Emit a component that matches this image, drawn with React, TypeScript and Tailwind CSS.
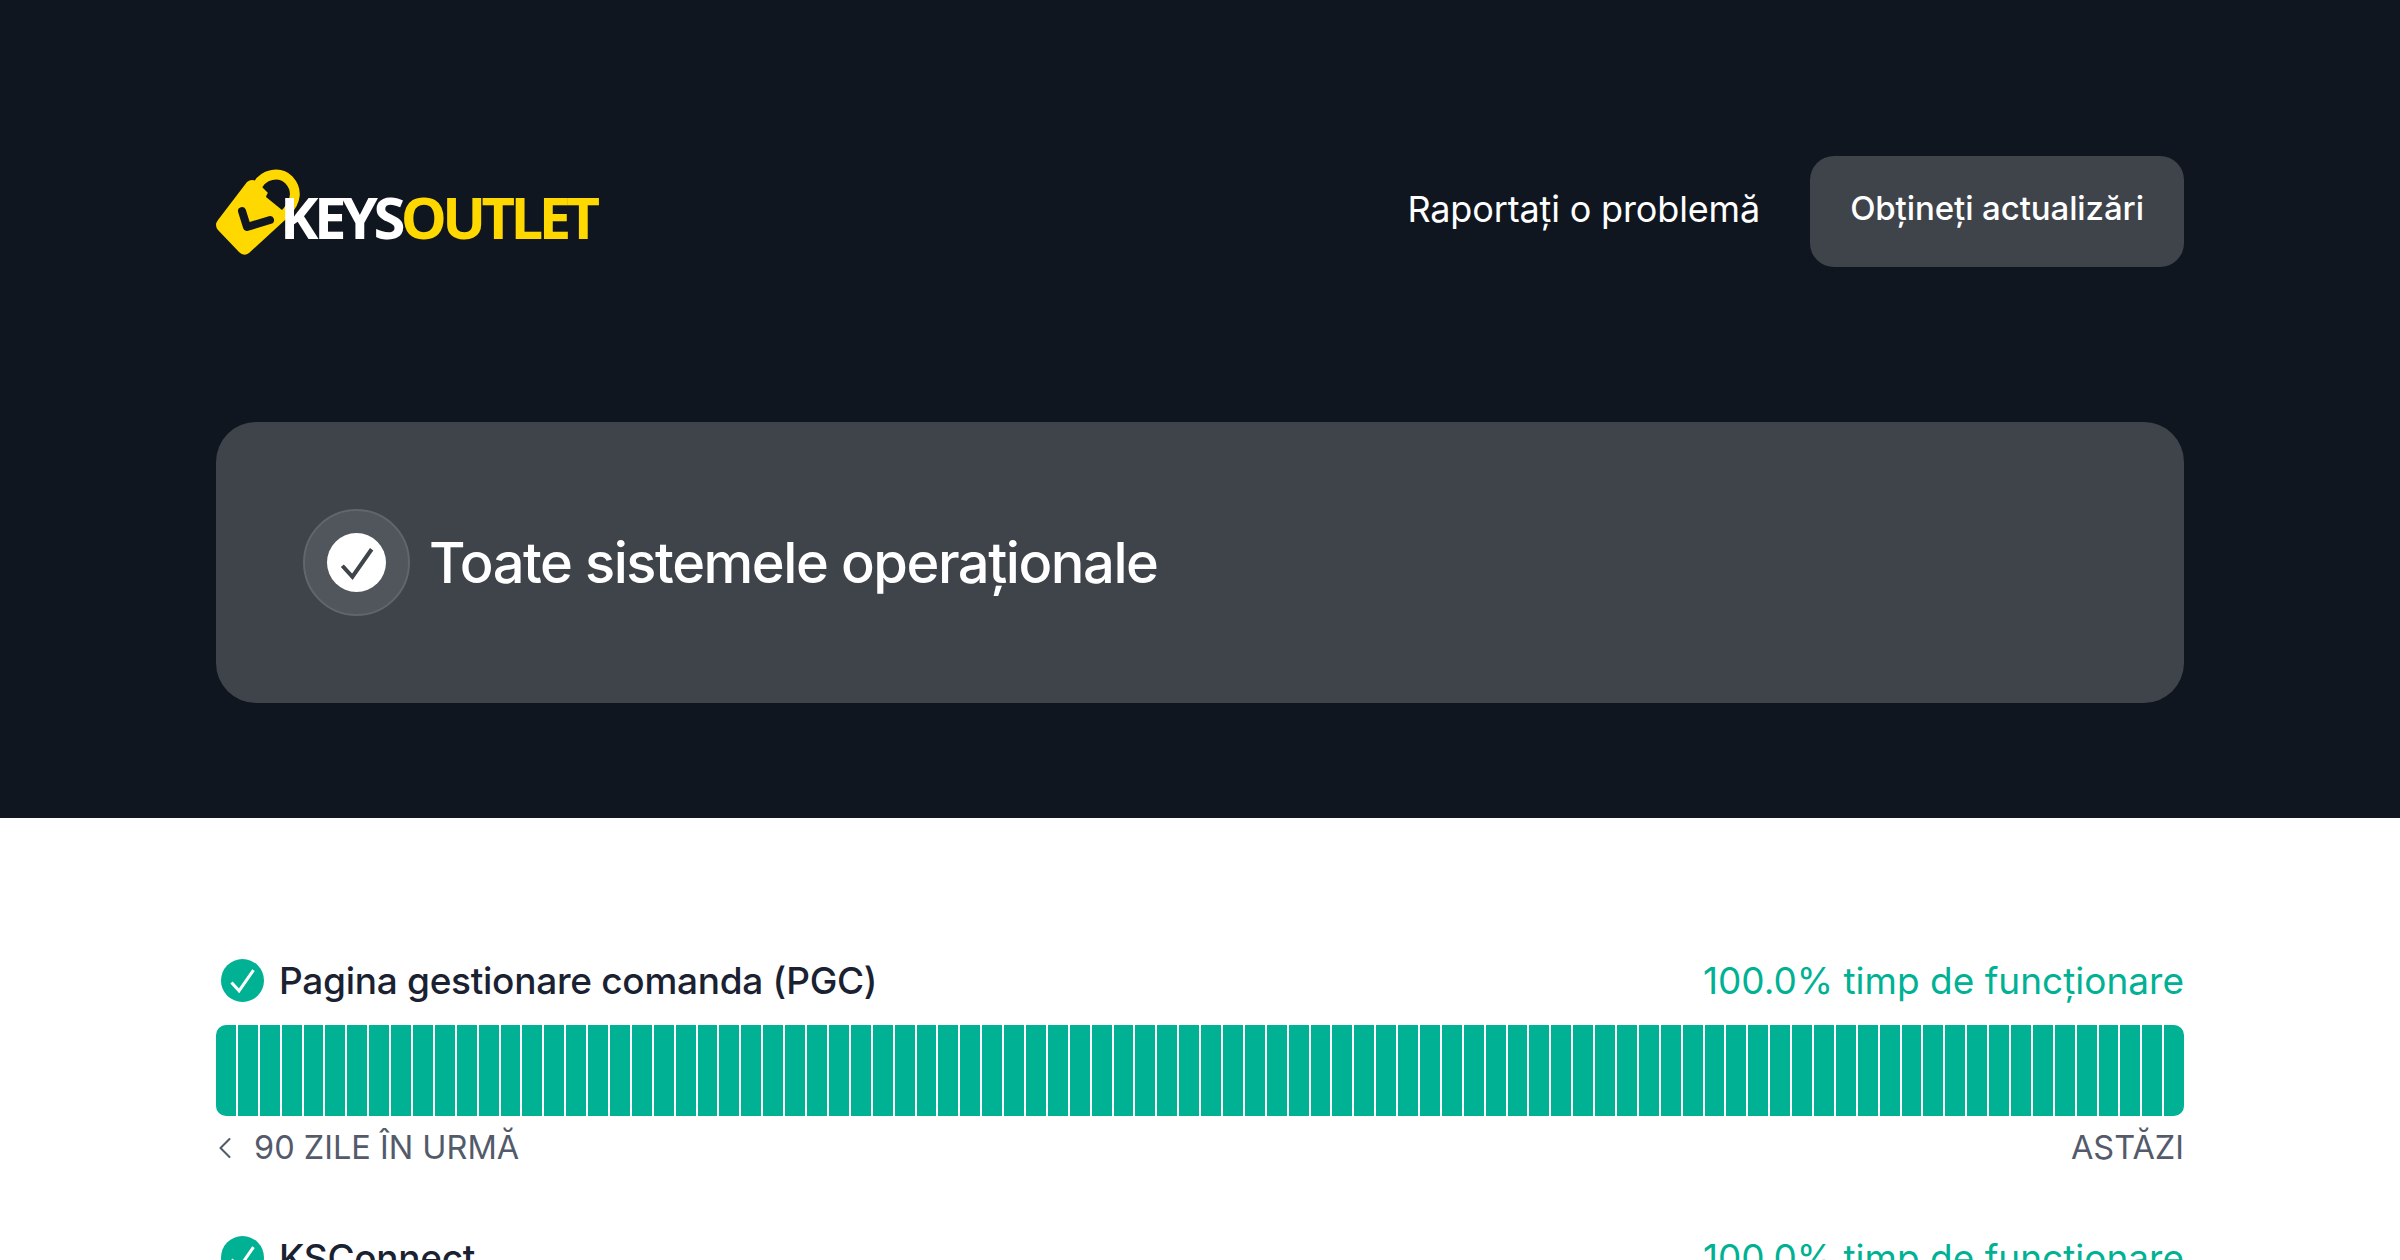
import React from 'react';
import { ChevronLeft } from 'lucide-react';

const days = Array.from({ length: 90 }, (_, i) => i);

const Tick: React.FC<{ className: string; strokeWidth: number }> = ({ className, strokeWidth }) => (
  <svg viewBox="0 0 24 24" fill="none" stroke="currentColor" strokeWidth={strokeWidth} className={className}>
    <path d="M4 13.5 L9.5 19.5 L20 4.5" />
  </svg>
);

const Logo: React.FC = () => (
  <div className="flex items-center h-[88px] w-[384px] mt-[3px]">
    <svg viewBox="0 0 88 88" className="w-[88px] h-[88px] shrink-0">
      {/* shackle */}
      <path d="M40 20 C46 4 64 2 73 11 C82 21 80 33 70 43" fill="none" stroke="#ffd800" strokeWidth="10" />
      {/* lock body */}
      <path d="M31 13 Q36 9 41 13 L69 41 Q73 46 69 51 L33 84 Q28 88 23 83 L2 61 Q-2 56 2 51 Z" fill="#ffd800" />
      {/* check */}
      <path d="M26 42 L31 58 L54 51" fill="none" stroke="#0f1620" strokeWidth="8" strokeLinecap="round" strokeLinejoin="round" />
      {/* shackle opening */}
      <path d="M50 28 C52 20 62 17 68 23 C73 29 71 36 66 41 Z" fill="#0f1620" />
    </svg>
    <div className="-ml-[24px] mt-[7px] font-['Open_Sans'] font-bold text-[58px] leading-none tracking-[-4.6px] whitespace-nowrap">
      <span className="text-white">KEYS</span>
      <span className="text-[#ffd800]">OUTLET</span>
    </div>
  </div>
);

const ServiceRow: React.FC<{ name: string }> = ({ name }) => (
  <div className="mb-[72px]">
    <div className="flex items-center justify-between h-[42px] mb-[24px]">
      <div className="flex items-center">
        <div className="flex items-center justify-center w-[43px] h-[43px] ml-[5px] rounded-full bg-[#00b194]">
          <Tick className="w-[33px] h-[33px] text-white" strokeWidth={2.2} />
        </div>
        <span className="ml-[15px] text-[37px] font-medium leading-none tracking-[-0.28px] text-[#1a2232]">{name}</span>
      </div>
      <span className="text-[37px] leading-none text-[#00b194]">100.0% timp de funcționare</span>
    </div>
    <div className="flex gap-[2px] h-[91px] rounded-[10px] overflow-hidden">
      {days.map((d) => (
        <div key={d} className="flex-1 bg-[#00b194]" />
      ))}
    </div>
    <div className="flex items-center justify-between h-[32px] mt-[16px] text-[32.5px] leading-none text-[#535b6b]">
      <div className="flex items-center">
        <ChevronLeft className="w-[36px] h-[36px] -ml-[9px]" strokeWidth={1.4} />
        <span className="ml-[11px]">90 ZILE ÎN URMĂ</span>
      </div>
      <span>ASTĂZI</span>
    </div>
  </div>
);

export default function App() {
  return (
    <div className="h-[1260px] overflow-hidden bg-white font-['Inter',sans-serif]">
      {/* Dark header */}
      <section className="h-[818px] bg-[#0f1620] px-[216px] pt-[156px]">
        <div className="flex items-center justify-between h-[111px]">
          <Logo />
          <div className="flex items-center gap-[50px]">
            <a className="text-[36px] text-white leading-none tracking-[-0.15px] -mt-[5px]">Raportați o problemă</a>
            <button className="h-[111px] w-[374px] pb-[5px] rounded-[24px] bg-[#3f434a] text-[33px] font-medium tracking-[-0.1px] text-white">
              Obțineți actualizări
            </button>
          </div>
        </div>

        {/* Status banner */}
        <div className="flex items-center h-[281px] mt-[155px] pl-[87px] rounded-[40px] bg-[#3f434a]">
          <div className="flex items-center justify-center w-[107px] h-[107px] rounded-full bg-[#51565c] border-2 border-[#62666c]">
            <div className="flex items-center justify-center w-[59px] h-[59px] rounded-full bg-white">
              <Tick className="w-[44px] h-[44px] text-[#3f434a]" strokeWidth={2.2} />
            </div>
          </div>
          <h1 className="ml-[19px] text-[56px] font-medium leading-none tracking-[-1.45px] text-white">Toate sistemele operaționale</h1>
        </div>
      </section>

      {/* Services */}
      <section className="px-[216px] pt-[141px]">
        <ServiceRow name="Pagina gestionare comanda (PGC)" />
        <ServiceRow name="KSConnect" />
      </section>
    </div>
  );
}
